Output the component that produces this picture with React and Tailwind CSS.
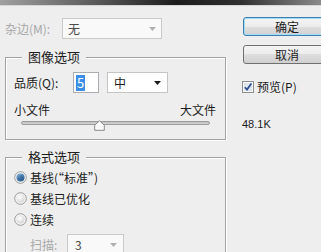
const Arrow = ({ color = "#1a1a1a" }) => (
  <svg width="7" height="4" viewBox="0 0 7 4">
    <path d="M0 0h7L3.5 4z" fill={color} />
  </svg>
);

function Radio({ checked, label }) {
  return (
    <div className="flex h-[21px] items-center gap-[3px] pl-[8px]">
      <svg width="13" height="13" viewBox="0 0 13 13">
        <defs>
          <radialGradient id={checked ? "rOn" : "rOff"} cx="0.4" cy="0.35" r="0.7">
            <stop offset="0" stopColor={checked ? "#9fd0f5" : "#ffffff"} />
            <stop offset="1" stopColor={checked ? "#1b4f86" : "#d4d4d4"} />
          </radialGradient>
        </defs>
        <circle cx="6.5" cy="6.5" r="5.8" fill="#f4f4f4" stroke="#9a9a9a" strokeWidth="1" />
        <circle cx="6.5" cy="6.5" r="4" fill={checked ? "url(#rOn)" : "url(#rOff)"} />
        {checked && <circle cx="6.5" cy="6.5" r="2.6" fill="#1f4d80" opacity="0.55" />}
      </svg>
      <span className="leading-[16px]">{label}</span>
    </div>
  );
}

function Group({ title, h, children }) {
  return (
    <div
      className={`ml-[5px] w-[221px] border border-[#a3a3a3] shadow-[inset_1px_1px_0_#ffffff,1px_1px_0_#ffffff] ${h}`}
    >
      <div className="-mt-[9px] ml-[16px] w-fit bg-[#eeeeee] px-[6px] text-[13px] leading-[16px]">
        {title}
      </div>
      {children}
    </div>
  );
}

export default function App() {
  return (
    <div className="h-[252px] w-[321px] overflow-hidden bg-[#eeeeee] text-[12px] text-[#1c1c1c] [font-family:'Noto_Sans_CJK_SC',sans-serif]">
      <div className="h-[5px] bg-[linear-gradient(90deg,#a0a0a0_0%,#5a5a5a_30%,#1c1c1c_55%,#303030_75%,#8a8a8a_100%)]" />
      <div className="h-px bg-[#d6d6d6]" />

      <div className="flex">
        {/* left column */}
        <div className="w-[226px] shrink-0">
          <div className="mt-[12px] flex h-[21px] items-center">
            <span className="w-[62px] pl-[5px] leading-[16px] text-[#a8a8a8]">杂边(M):</span>
            <div className="flex h-[21px] w-[100px] items-center justify-between border border-[#cacaca] bg-[#f9f9f9] pl-[5px] pr-[5px]">
              <span className="leading-[16px] text-[#4a4a4a]">无</span>
              <Arrow color="#b0b0b0" />
            </div>
          </div>

          <div className="mt-[18px]">
            <Group title="图像选项" h="h-[83px]">
              <div className="mt-[7px] flex h-[21px] items-center">
                <span className="w-[67px] pl-[8px] leading-[16px]">品质(Q):</span>
                <div className="flex h-[21px] w-[26px] items-center border border-[#abadb3] bg-white pl-[2px]">
                  <span className="bg-[#3a8ee6] px-px text-[13px] leading-[16px] text-white">5</span>
                </div>
                <div className="ml-[8px] flex h-[21px] w-[61px] items-center justify-between border border-[#c4c4c4] bg-white pl-[6px] pr-[6px]">
                  <span className="leading-[16px]">中</span>
                  <Arrow />
                </div>
              </div>
              <div className="mt-[9px] flex h-[16px] justify-between pl-[8px] pr-[9px] leading-[16px]">
                <span>小文件</span>
                <span>大文件</span>
              </div>
              <div className="relative ml-[15px] h-[10px] w-[189px]">
                <div className="mt-[3px] h-[4px] rounded-full border border-[#9c9c9c] bg-[linear-gradient(#bdbdbd,#d6d6d6)]" />
                <svg className="absolute -top-[1px] left-[73px]" width="11" height="11" viewBox="0 0 11 11">
                  <path d="M5.5 0.7L10.3 5.2V10.3H0.7V5.2Z" fill="#fbfbfb" stroke="#8a8a8a" strokeWidth="1" />
                </svg>
              </div>
            </Group>
          </div>

          <div className="mt-[17px]">
            <Group title="格式选项" h="h-[120px]">
              <div className="mt-[2px]">
                <Radio checked label="基线(“标准”)" />
                <Radio label="基线已优化" />
                <Radio label="连续" />
                <div className="mt-[4px] flex h-[21px] items-center pl-[24px]">
                  <span className="w-[37px] leading-[16px] text-[#a8a8a8]">扫描:</span>
                  <div className="flex h-[21px] w-[57px] items-center justify-between border border-[#cacaca] bg-[#f9f9f9] pl-[7px] pr-[6px]">
                    <span className="leading-[16px] text-[#4a4a4a]">3</span>
                    <Arrow color="#b0b0b0" />
                  </div>
                </div>
              </div>
            </Group>
          </div>
        </div>

        {/* right column */}
        <div className="flex-1 pl-[16px]">
          <div className="ml-px mt-[11px] flex h-[19px] w-[88px] items-center justify-center rounded-[3px] border border-[#3c7fb1] bg-[linear-gradient(#f4f4f4,#ececec_50%,#dedede_50%,#d2d2d2)] shadow-[inset_0_0_0_1px_#9fdcf5]">
            <span className="leading-[16px]">确定</span>
          </div>
          <div className="ml-px mt-[9px] flex h-[19px] w-[88px] items-center justify-center rounded-[3px] border border-[#707070] bg-[linear-gradient(#f4f4f4,#ececec_50%,#dedede_50%,#d0d0d0)]">
            <span className="leading-[16px]">取消</span>
          </div>
          <div className="mt-[17px] flex h-[12px] items-center gap-[3px]">
            <svg width="12" height="12" viewBox="0 0 12 12">
              <rect x="0.5" y="0.5" width="11" height="11" fill="#f6f6f6" stroke="#8e8f8f" />
              <rect x="2" y="2" width="8" height="8" fill="#dfe6ee" />
              <path d="M2.8 6.2L5 8.6L9.4 2.6" fill="none" stroke="#2a4d8f" strokeWidth="1.7" />
            </svg>
            <span className="leading-[16px]">预览(P)</span>
          </div>
          <div className="mt-[24px] text-[11px] leading-[14px] [font-family:'Liberation_Sans',sans-serif]">
            48.1K
          </div>
        </div>
      </div>
    </div>
  );
}
